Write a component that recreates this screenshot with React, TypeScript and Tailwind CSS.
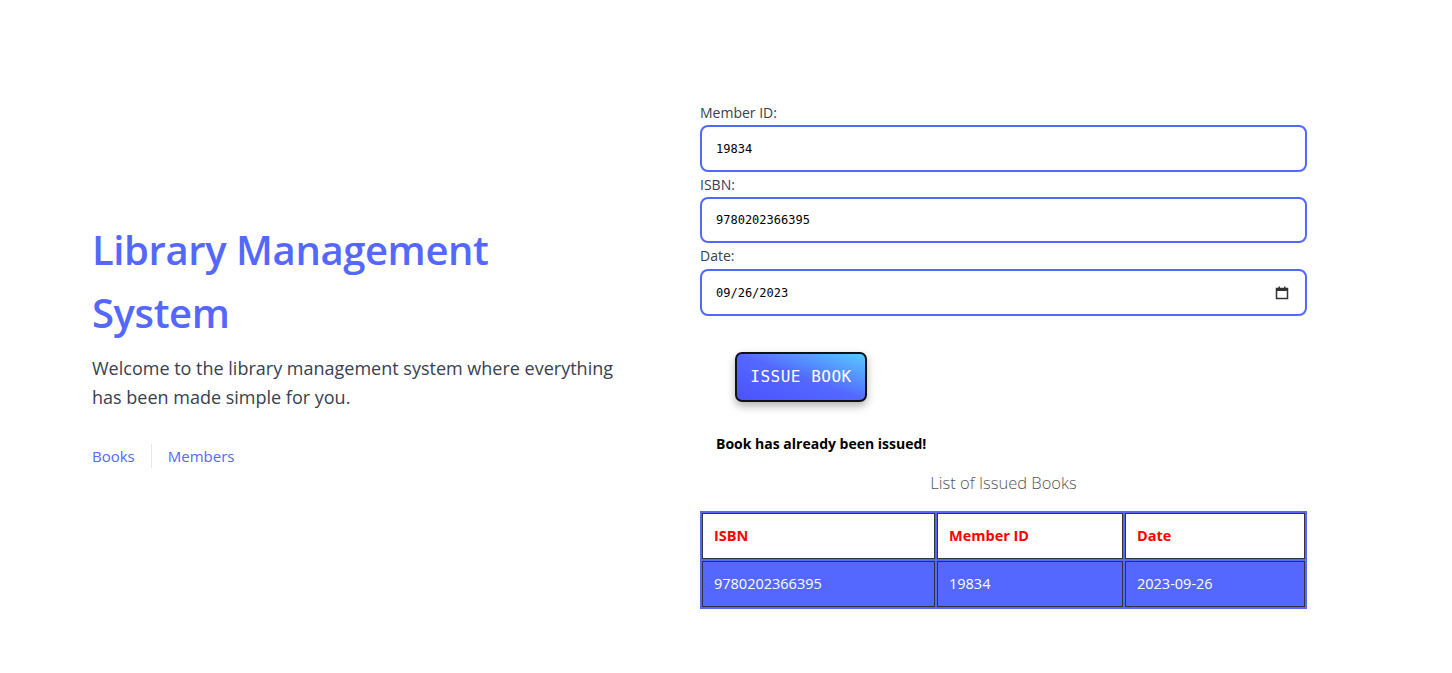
import React from 'react';

const issued = [{ isbn: '9780202366395', member: '19834', date: '2023-09-26' }];

export default function App() {
  return (
    <div
      className="min-h-screen bg-white flex items-start text-[#374151]"
      style={{ fontFamily: '"Open Sans", "Noto Sans", sans-serif' }}
    >
      {/* intro */}
      <div className="w-[540px] ml-[92px] mt-[218px] shrink-0">
        <h1 className="w-[530px] text-[40px] leading-[63px] font-semibold text-[#5468ff] tracking-[-0.4px]">
          Library Management System
        </h1>
        <p className="mt-[10px] text-[18px] leading-[29px] text-[#374151]">
          Welcome to the library management system where everything has been made simple for you.
        </p>
        <div className="mt-[32px] flex items-center text-[15px] text-[#5468ff]">
          <a href="#" className="pr-4 leading-[24px]">Books</a>
          <span className="w-px h-[24px] bg-gray-200" />
          <a href="#" className="pl-4 leading-[24px]">Members</a>
        </div>
      </div>

      {/* issue form */}
      <div className="w-[607px] ml-[68px] mt-[100px] shrink-0">
        <label className="block text-[14px] leading-[25px] text-[#374151]">Member ID:</label>
        <input
          readOnly
          value="19834"
          className="block w-full h-[47px] px-[14px] border-2 border-[#5468ff] rounded-[8px] text-[12px] text-black outline-none"
          style={{ fontFamily: '"DejaVu Sans Mono", monospace' }}
        />
        <label className="block text-[14px] leading-[25px] text-[#374151]">ISBN:</label>
        <input
          readOnly
          value="9780202366395"
          className="block w-full h-[46px] px-[14px] border-2 border-[#5468ff] rounded-[8px] text-[12px] text-black outline-none"
          style={{ fontFamily: '"DejaVu Sans Mono", monospace' }}
        />
        <label className="block text-[14px] leading-[26px] text-[#374151]">Date:</label>
        <div
          className="flex items-center justify-between w-full h-[47px] px-[14px] border-2 border-[#5468ff] rounded-[8px] text-[12px] text-black"
          style={{ fontFamily: '"DejaVu Sans Mono", monospace' }}
        >
          <span>09/26/2023</span>
          <svg width="14" height="14" viewBox="0 0 14 14" className="mr-[2px]">
            <rect x="1.5" y="2.5" width="11" height="10" fill="none" stroke="#333" strokeWidth="1.5" />
            <rect x="1.5" y="2.5" width="11" height="2.5" fill="#333" />
            <rect x="3.5" y="0.5" width="1.5" height="2.5" fill="#333" />
            <rect x="9" y="0.5" width="1.5" height="2.5" fill="#333" />
          </svg>
        </div>

        <button
          className="mt-[36px] ml-[35px] w-[132px] h-[50px] rounded-[7px] border-2 border-[#111] bg-gradient-to-tr from-[#4b52ff] via-[#5468ff] to-[#5ac8ff] text-white text-[16px] tracking-[0.5px] shadow-[0_4px_8px_rgba(0,0,0,0.3)]"
          style={{ fontFamily: '"DejaVu Sans Mono", monospace' }}
        >
          ISSUE BOOK
        </button>

        <p className="mt-[32px] ml-[16px] text-[14px] leading-[20px] font-bold text-black">
          Book has already been issued!
        </p>

        <h2 className="mt-[17px] text-center text-[16.5px] leading-[24px] font-light text-[#555]">
          List of Issued Books
        </h2>

        <table className="mt-[16px] w-full border-separate border-spacing-[2px] bg-[#5468ff] text-[14.5px]">
          <thead>
            <tr>
              <th className="w-[233px] h-[46px] bg-white border border-[#333] text-left pl-[11px] font-bold text-[#ff0000]">ISBN</th>
              <th className="w-[186px] h-[46px] bg-white border border-[#333] text-left pl-[11px] font-bold text-[#ff0000]">Member ID</th>
              <th className="h-[46px] bg-white border border-[#333] text-left pl-[11px] font-bold text-[#ff0000]">Date</th>
            </tr>
          </thead>
          <tbody>
            {issued.map((row) => (
              <tr key={row.isbn}>
                <td className="h-[46px] border border-[#333] pl-[11px] text-white">{row.isbn}</td>
                <td className="h-[46px] border border-[#333] pl-[11px] text-white">{row.member}</td>
                <td className="h-[46px] border border-[#333] pl-[11px] text-white">{row.date}</td>
              </tr>
            ))}
          </tbody>
        </table>
      </div>
    </div>
  );
}
